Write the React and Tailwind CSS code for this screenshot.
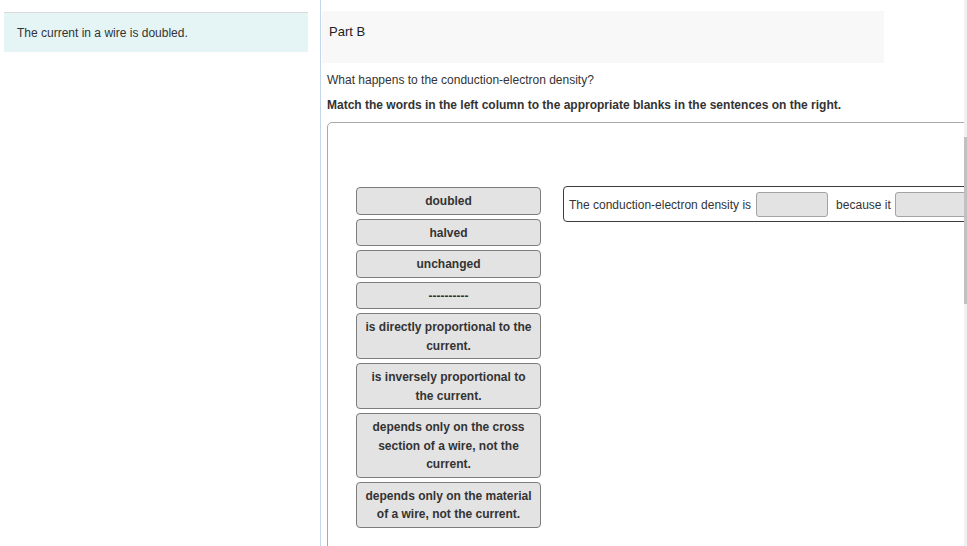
import React from 'react';

const choices = [
  'doubled',
  'halved',
  'unchanged',
  '----------',
  'is directly proportional to the current.',
  'is inversely proportional to the current.',
  'depends only on the cross section of a wire, not the current.',
  'depends only on the material of a wire, not the current.'
];

const Blank = ({ className = '' }) => (
  <span className={`inline-block h-[25px] bg-[#e3e3e3] border border-[#a3a3a3] rounded-[3px] shrink-0 ${className}`} />
);

const App = () => {
  return (
    <div
      className="w-[967px] h-[546px] flex overflow-hidden bg-white text-[#333]"
      style={{ fontFamily: '"Liberation Sans", Arial, sans-serif' }}
    >
      {/* left prompt column */}
      <div className="w-[321px] shrink-0 border-r border-[#c3d8ea]">
        <div className="ml-1 mt-3 w-[304px] h-[40px] border-t border-[#d7dbdb] bg-[#e5f5f6] pl-[13px] pt-[12px] text-[12px] leading-4">
          The current in a wire is doubled.
        </div>
      </div>

      {/* main part */}
      <div className="flex-1 min-w-0 overflow-hidden">
        <div className="ml-[1px] mt-[11px] w-[562px] h-[52px] bg-[#f8f8f8] pl-[7px] pt-[13px] text-[13px] leading-4 text-[#222]">
          Part B
        </div>

        <div className="pl-[6px]">
          <p className="mt-[9px] text-[12px] leading-4">What happens to the conduction-electron density?</p>
          <p className="mt-[9px] text-[12px] leading-4 font-bold">
            Match the words in the left column to the appropriate blanks in the sentences on the right.
          </p>

          <div className="mt-[9px] w-[700px] h-[500px] border border-[#a8a8a8] rounded-tl-[5px] pl-[28px] pt-[64px] flex items-start gap-[22px]">
            <div className="w-[185px] shrink-0 flex flex-col gap-1">
              {choices.map((c) => (
                <div
                  key={c}
                  className="bg-[#e3e3e3] border border-[#7d7d7d] rounded-[4px] px-[6px] pt-1 pb-[3px] text-center text-[12px] leading-[18.5px] font-bold"
                >
                  {c}
                </div>
              ))}
            </div>

            <div className="-mt-px w-[450px] shrink-0 h-[36px] border border-[#3d3d3d] rounded-l-[4px] pl-[5px] pt-px flex items-center text-[12px] whitespace-nowrap">
              <span>The conduction-electron density is</span>
              <Blank className="ml-[5px] w-[72px]" />
              <span className="ml-[8px]">because it</span>
              <Blank className="ml-[4px] w-[120px]" />
            </div>
          </div>
        </div>
      </div>

      {/* scrollbar strip */}
      <div className="w-[3px] shrink-0 bg-[#f1f1f1]">
        <div className="mt-[137px] h-[167px] bg-[#c1c1c1]" />
      </div>
    </div>
  );
};

export default App;
